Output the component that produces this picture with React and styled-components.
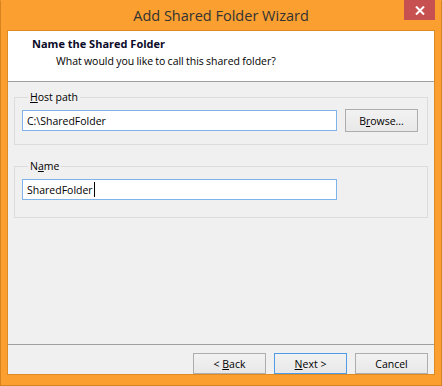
import React from "react";
import styled, { createGlobalStyle } from "styled-components";

const GlobalStyle = createGlobalStyle`
  html, body {
    margin: 0;
    padding: 0;
    background: #fff;
  }
  body {
    font-family: "Segoe UI", "Open Sans", "Noto Sans", sans-serif;
    font-size: 10.5px;
    color: #000;
  }
`;

const Window = styled.div`
  box-sizing: border-box;
  width: 442px;
  height: 386px;
  display: flex;
  flex-direction: column;
  background: #fa9f30;
  border: 1px solid #d9831e;
  border-top-color: #fa9f30;
  padding: 0 6px 10px;
`;

const TitleBar = styled.div`
  height: 29px;
  display: grid;
  grid-template-columns: 1fr auto 1fr;
  align-items: start;
`;

const Title = styled.div`
  grid-column: 2;
  padding-top: 5px;
  font-size: 14.5px;
  line-height: 20px;
  color: #333;
  white-space: nowrap;
`;

const CloseButton = styled.div`
  grid-column: 3;
  justify-self: end;
  width: 31px;
  height: 20px;
  margin-top: -1px;
  background: #c75050;
  display: flex;
  align-items: center;
  justify-content: center;
`;

const Client = styled.div`
  flex: 1;
  display: flex;
  flex-direction: column;
  border: 1px solid #df8a22;
  background: #f0f0f0;
`;

const Header = styled.div`
  height: 51px;
  box-sizing: border-box;
  background: #fff;
  border-bottom: 1px solid #a0a0a0;
  padding: 5px 0 0 24px;
`;

const HeaderTitle = styled.div`
  font-weight: 700;
  font-size: 11px;
  line-height: 16px;
  color: #0a0a28;
`;

const HeaderSub = styled.div`
  padding: 2px 0 0 24px;
  line-height: 14px;
  word-spacing: -0.5px;
`;

const Body = styled.div`
  flex: 1;
  padding: 7px 6px 0;
  display: flex;
  flex-direction: column;
  gap: 13px;
`;

const Group = styled.fieldset`
  margin: 0;
  border: 1px solid #dcdcdc;
  padding: ${(p) => p.$pad};
  min-width: 0;
`;

const Legend = styled.legend`
  padding: 0 2px;
  margin-left: 6px;
  line-height: 16px;
`;

const Row = styled.div`
  display: flex;
  align-items: center;
  gap: 8px;
`;

const TextBox = styled.div`
  box-sizing: border-box;
  width: 315px;
  height: 21px;
  border: 1px solid #7eb4ea;
  background: #fff;
  padding: 0 4px;
  display: flex;
  align-items: center;
  line-height: 16px;
`;

const Caret = styled.span`
  display: inline-block;
  width: 1px;
  height: 15px;
  background: #000;
  margin-left: 1px;
`;

const Button = styled.div`
  box-sizing: border-box;
  width: 73px;
  height: ${(p) => p.$h || 21}px;
  border: 1px solid ${(p) => (p.$default ? "#4f9be6" : "#adadad")};
  background: linear-gradient(#f2f2f2, #e8e8e8);
  display: flex;
  align-items: center;
  justify-content: center;
  line-height: 16px;
`;

const Footer = styled.div`
  height: 30px;
  box-sizing: border-box;
  border-top: 1px solid #a0a0a0;
  padding: 8px 6px 0 0;
  display: flex;
  justify-content: flex-end;
  gap: 8px;
`;

export default function App() {
  return (
    <>
      <GlobalStyle />
      <Window>
        <TitleBar>
          <Title>Add Shared Folder Wizard</Title>
          <CloseButton>
            <svg width="10" height="9" viewBox="0 0 10 9">
              <path d="M1 0.5 L9 8.5 M9 0.5 L1 8.5" stroke="#fff" strokeWidth="2" />
            </svg>
          </CloseButton>
        </TitleBar>
        <Client>
          <Header>
            <HeaderTitle>Name the Shared Folder</HeaderTitle>
            <HeaderSub>What would you like to call this shared folder?</HeaderSub>
          </Header>
          <Body>
            <Group $pad="4px 9px 12px 7px">
              <Legend>
                <u>H</u>ost path
              </Legend>
              <Row>
                <TextBox>C:\SharedFolder</TextBox>
                <Button $h={23}>
                  B<u>r</u>owse...
                </Button>
              </Row>
            </Group>
            <Group $pad="5px 9px 17px 7px">
              <Legend>
                N<u>a</u>me
              </Legend>
              <TextBox>
                SharedFolder
                <Caret />
              </TextBox>
            </Group>
          </Body>
          <Footer>
            <Button>
              &lt;&nbsp;<u>B</u>ack
            </Button>
            <Button $default>
              <u>N</u>ext &gt;
            </Button>
            <Button>Cancel</Button>
          </Footer>
        </Client>
      </Window>
    </>
  );
}
